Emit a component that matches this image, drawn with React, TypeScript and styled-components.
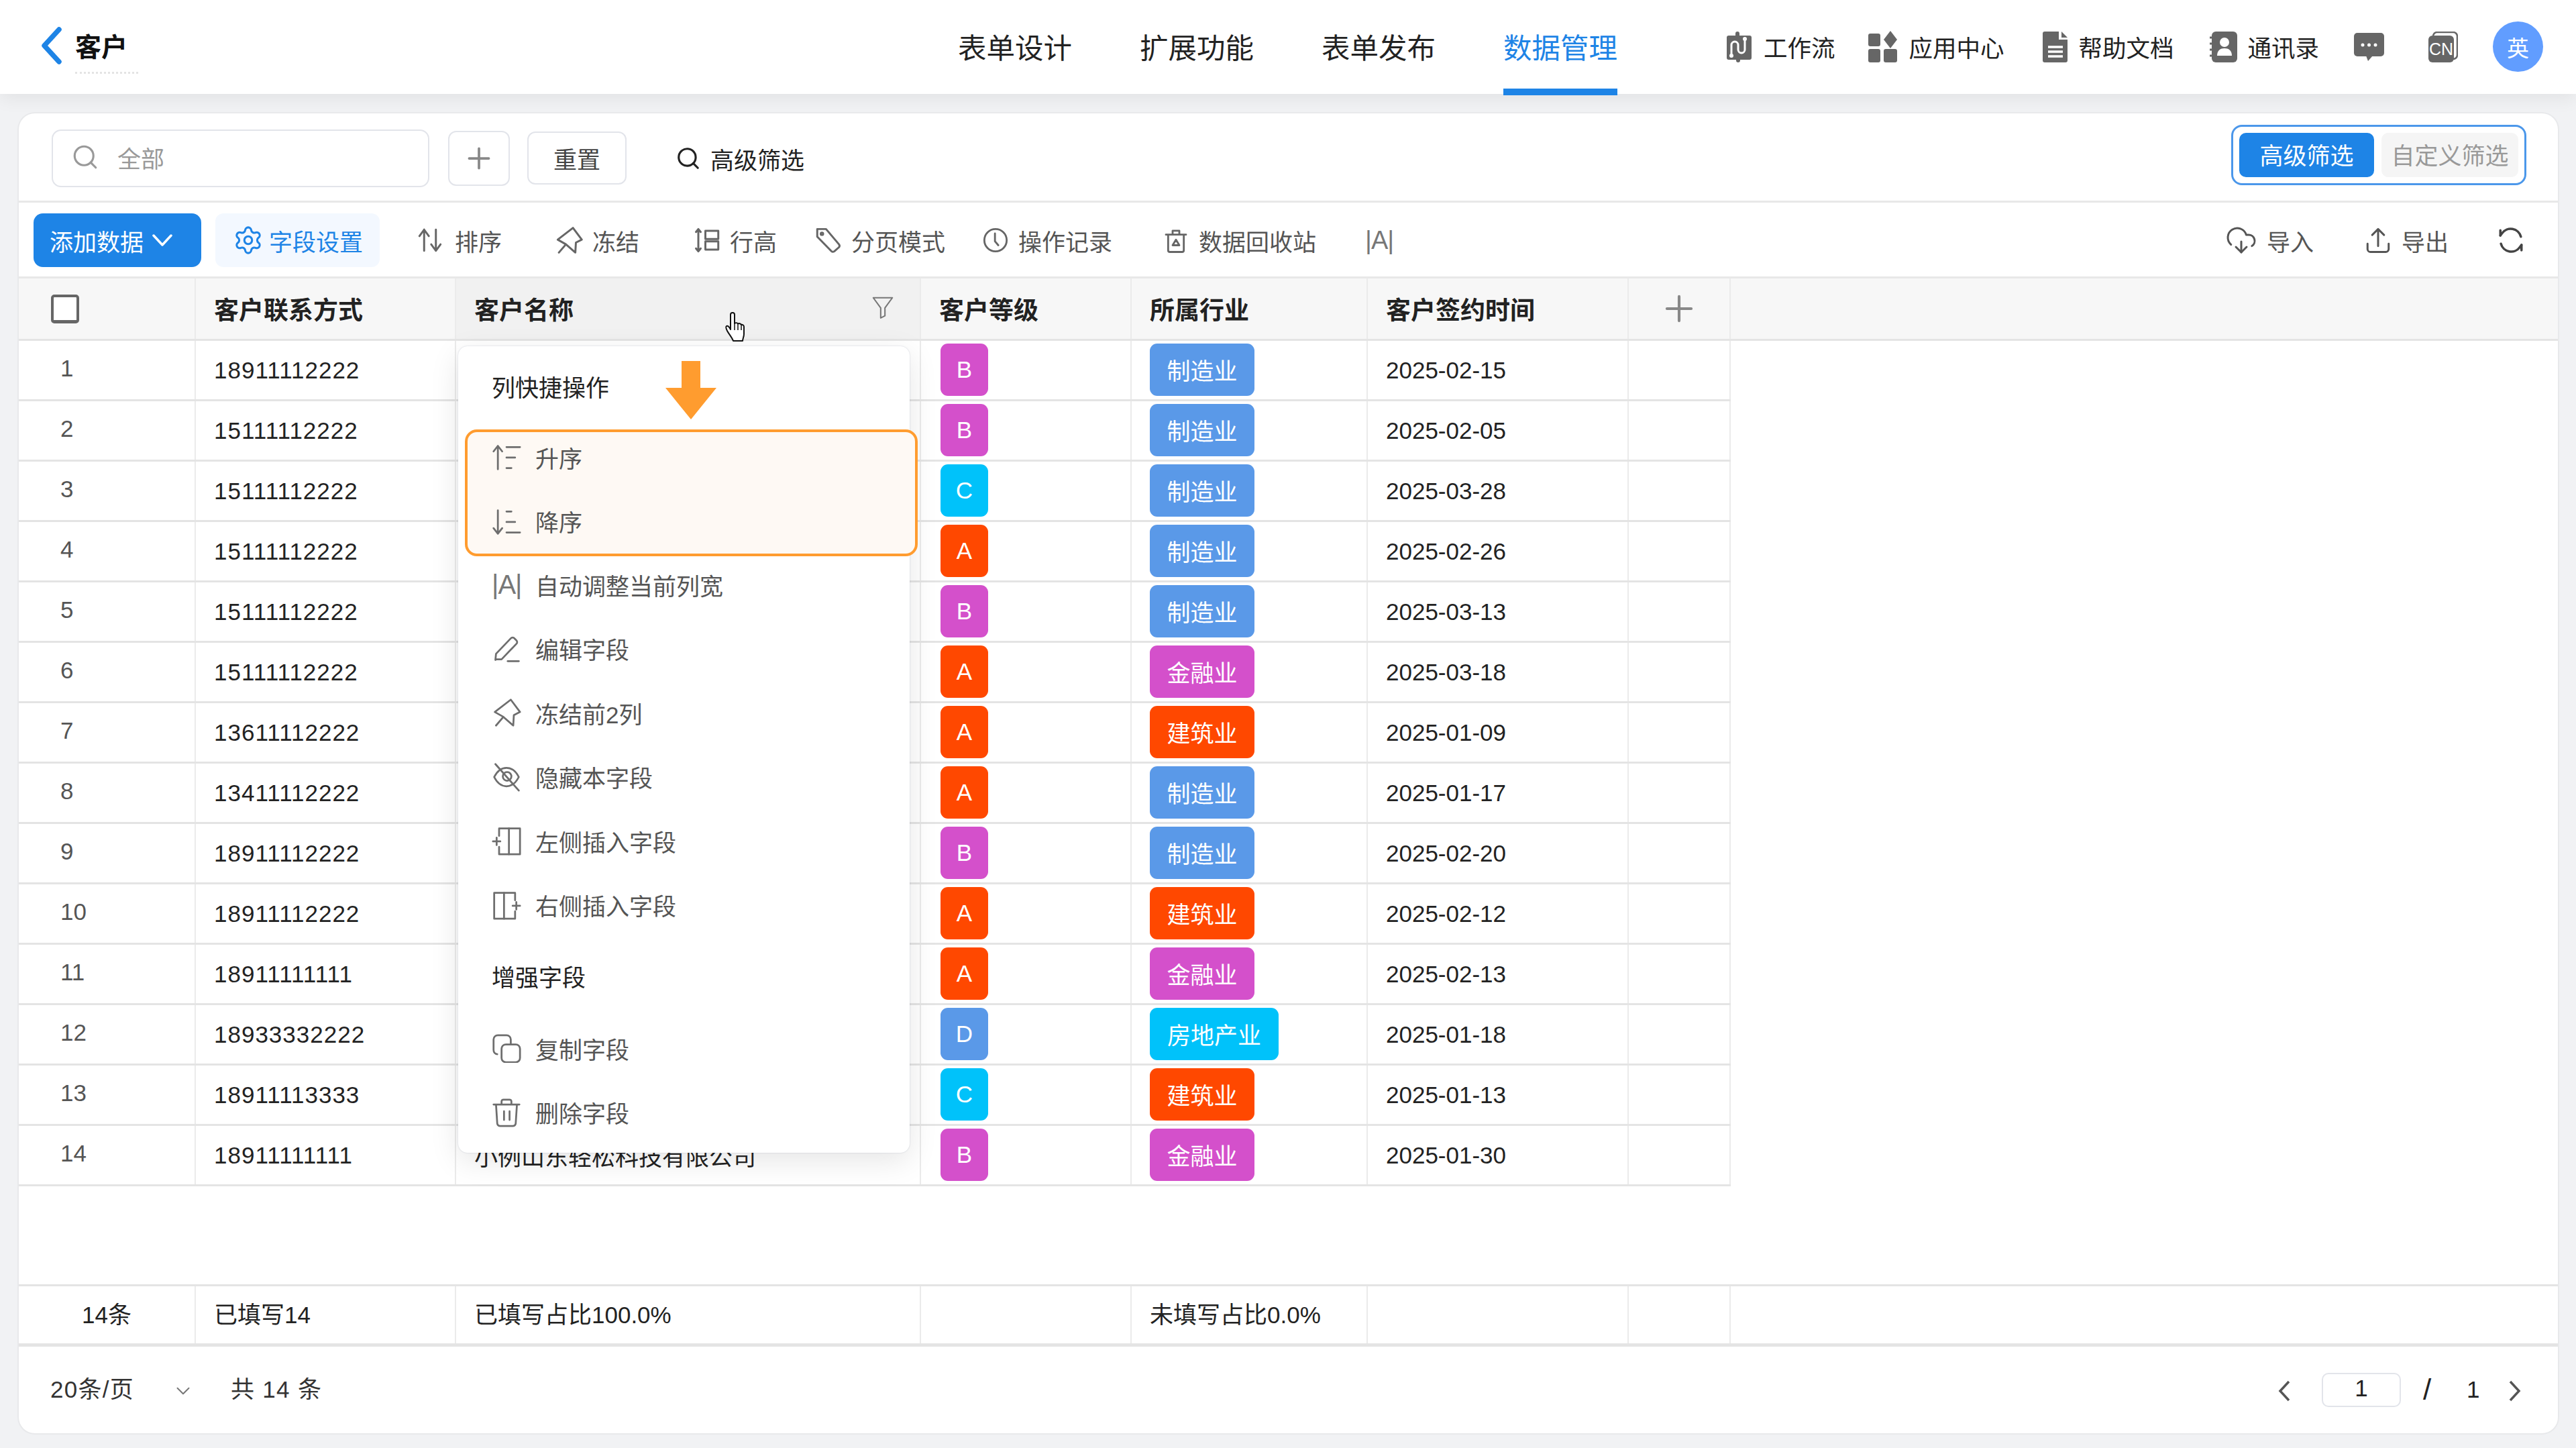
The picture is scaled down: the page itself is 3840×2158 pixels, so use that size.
import React from "react";
import styled, { createGlobalStyle } from "styled-components";
import { Search, Plus, Settings, ChevronDown, CloudDownload } from "lucide-react";

const FONT = `"Liberation Sans", "Noto Sans CJK SC", sans-serif`;
const COLUMNS = "264px 388px 693px 314px 352px 389px 152px";

const GlobalStyle = createGlobalStyle`
  html, body {
    margin: 0;
    padding: 0;
    background: #f1f2f4;
  }
  * {
    box-sizing: border-box;
  }
`;

const Page = styled.div`
  position: relative;
  width: 3840px;
  height: 2158px;
  overflow: hidden;
  background: #f1f2f4;
  font-family: ${FONT};
  font-size: 35px;
  color: #222;
`;

const TopBar = styled.div`
  position: absolute;
  left: 0;
  top: 0;
  width: 3840px;
  height: 140px;
  background: #fff;
  box-shadow: 0 6px 26px rgba(0, 0, 0, 0.07);
  z-index: 2;
`;

const BackLink = styled.div`
  position: absolute;
  left: 59px;
  top: 40px;
  display: flex;
  align-items: flex-start;
  gap: 19px;
`;

const PageTitle = styled.div`
  font-size: 39px;
  font-weight: 700;
  color: #111;
  line-height: 56px;
  border-bottom: 3px dotted #e4e4e4;
  padding-bottom: 8px;
  padding-right: 16px;
  margin-top: 3px;
`;

const Nav = styled.div`
  position: absolute;
  left: 1428px;
  top: 0;
  display: flex;
  gap: 101px;
`;

const NavItem = styled.div<{ $active?: boolean }>`
  height: 142px;
  padding-top: 44px;
  line-height: 58px;
  font-size: 42.5px;
  color: ${(p) => (p.$active ? "#1e84e6" : "#222")};
  border-bottom: 10px solid ${(p) => (p.$active ? "#1e84e6" : "transparent")};
`;

const TopActions = styled.div`
  position: absolute;
  left: 2572px;
  top: 32px;
  height: 75px;
  display: flex;
  align-items: center;
`;

const TopAction = styled.div<{ $gap?: number }>`
  display: flex;
  align-items: center;
  gap: 16px;
  margin-left: ${(p) => p.$gap ?? 0}px;
  color: #222;
  font-size: 35.5px;
`;

const Avatar = styled.div`
  width: 75px;
  height: 75px;
  border-radius: 50%;
  background: #619dff;
  color: #fff;
  font-size: 33px;
  display: flex;
  align-items: center;
  justify-content: center;
  margin-left: 52px;
`;

const Card = styled.div`
  position: absolute;
  left: 28px;
  top: 169px;
  width: 3785px;
  height: 1967px;
  background: #fff;
  border-radius: 24px;
  box-shadow: 0 0 0 2px #e8e9eb;
`;

const FilterRow = styled.div`
  position: relative;
  height: 133px;
  border-bottom: 3px solid #e8e8e8;
  display: flex;
  align-items: flex-start;
`;

const SearchBox = styled.div`
  margin: 24px 0 0 49px;
  width: 563px;
  height: 86px;
  border: 2px solid #e2e4ea;
  border-radius: 14px;
  display: flex;
  align-items: center;
  padding: 0 0 4px 27px;
  color: #999;
  gap: 27px;
`;

const SquareButton = styled.div`
  margin: 26px 0 0 28px;
  width: 92px;
  height: 82px;
  border: 2px solid #e2e4ea;
  border-radius: 12px;
  display: flex;
  align-items: center;
  justify-content: center;
  color: #888;
`;

const ResetButton = styled.div`
  margin: 27px 0 0 26px;
  width: 148px;
  height: 79px;
  border: 2px solid #e2e4ea;
  border-radius: 12px;
  display: flex;
  align-items: center;
  justify-content: center;
  color: #444;
`;

const AdvancedLink = styled.div`
  margin: 36px 0 0 73px;
  height: 62px;
  display: flex;
  align-items: center;
  gap: 14px;
  color: #222;
`;

const ModeSwitch = styled.div`
  margin: 17px 47px 0 auto;
  width: 440px;
  height: 90px;
  border: 3px solid #4b97ea;
  border-radius: 16px;
  display: flex;
  align-items: center;
  padding-left: 9px;
  gap: 11px;
`;

const ModeTab = styled.div<{ $active?: boolean }>`
  width: ${(p) => (p.$active ? 201 : 204)}px;
  height: 66px;
  border-radius: 10px;
  padding-bottom: 4px;
  background: ${(p) => (p.$active ? "#1e84e6" : "#f5f5f5")};
  color: ${(p) => (p.$active ? "#fff" : "#999")};
  display: flex;
  align-items: center;
  justify-content: center;
`;

const Toolbar = styled.div`
  height: 113px;
  border-bottom: 3px solid #e8e8e8;
  display: flex;
  align-items: center;
  padding-left: 22px;
  padding-top: 2px;
`;

const AddButton = styled.div`
  width: 250px;
  height: 80px;
  border-radius: 14px;
  background: #1e84e6;
  color: #fff;
  display: flex;
  align-items: center;
  padding-left: 24px;
  gap: 12px;
`;

const FieldButton = styled.div`
  width: 245px;
  height: 80px;
  margin-left: 21px;
  border-radius: 12px;
  background: #f3f8ff;
  color: #1e84e6;
  display: flex;
  align-items: center;
  padding-left: 26px;
  gap: 8px;
`;

const ToolItem = styled.div<{ $gap: number; $end?: number }>`
  display: flex;
  align-items: center;
  gap: 14px;
  margin-left: ${(p) => p.$gap}px;
  margin-right: ${(p) => p.$end ?? 0}px;
  color: #555;
`;

const ToolSpacer = styled.div`
  margin-left: auto;
`;

const WidthGlyph = styled.span<{ $size: number }>`
  font-size: ${(p) => p.$size}px;
  width: 44px;
  text-align: center;
  color: #777;
  letter-spacing: -1px;
`;

const HeaderRow = styled.div`
  height: 93px;
  display: grid;
  grid-template-columns: ${COLUMNS};
  background: #f7f7f7;
  border-bottom: 3px solid #e4e4e4;
`;

const HeaderCell = styled.div<{ $hover?: boolean; $center?: boolean }>`
  position: relative;
  display: flex;
  align-items: center;
  justify-content: ${(p) => (p.$center ? "center" : "flex-start")};
  padding-left: ${(p) => (p.$center ? 0 : 27)}px;
  font-size: 37px;
  font-weight: 700;
  color: #222;
  border-right: 2px solid #ebebeb;
  background: ${(p) => (p.$hover ? "#f1f1f1" : "transparent")};
`;

const CheckBox = styled.div`
  width: 42px;
  height: 43px;
  margin-left: 21px;
  border: 4px solid #666;
  border-bottom-width: 5px;
  border-radius: 5px;
  background: #fff;
`;

const FilterGlyph = styled.div`
  position: absolute;
  right: 36px;
  top: 24px;
  line-height: 0;
`;

const BodyRow = styled.div`
  width: 2552px;
  height: 90px;
  display: grid;
  grid-template-columns: ${COLUMNS};
  border-bottom: 3px solid #e4e4e4;
`;

const Cell = styled.div`
  display: flex;
  align-items: center;
  padding-left: 27px;
  border-right: 2px solid #ebebeb;
  color: #222;
  white-space: nowrap;
`;

const NumberCell = styled(Cell)`
  padding: 0 0 5px 62px;
  color: #555;
`;

const PhoneCell = styled(Cell)`
  letter-spacing: 1px;
`;

const LevelCell = styled(Cell)`
  padding-left: 29px;
`;

const Badge = styled.div<{ $color: string; $width: number }>`
  width: ${(p) => p.$width}px;
  height: 78px;
  margin-top: -2px;
  border-radius: 11px;
  background: ${(p) => p.$color};
  color: #fff;
  display: flex;
  align-items: center;
  justify-content: center;
`;

const EmptyGap = styled.div`
  height: 149px;
  border-bottom: 3px solid #e4e4e4;
`;

const SummaryRow = styled(BodyRow)`
  width: 100%;
  border-bottom: 5px solid #e4e4e4;
  grid-template-columns: ${COLUMNS} 1fr;
`;

const SummaryCell = styled(Cell)`
  padding-bottom: 6px;
`;

const SummaryCount = styled(Cell)`
  padding: 0 0 6px 94px;
`;

const SummaryLast = styled.div``;

const Footer = styled.div`
  position: relative;
  height: 129px;
`;

const FooterText = styled.div<{ $x: number; $color?: string; $size?: number }>`
  position: absolute;
  left: ${(p) => p.$x}px;
  top: 42px;
  line-height: 44px;
  letter-spacing: 1.3px;
  font-size: ${(p) => p.$size ?? 35}px;
  color: ${(p) => p.$color ?? "#333"};
`;

const FooterIcon = styled.div<{ $x: number }>`
  position: absolute;
  left: ${(p) => p.$x}px;
  top: 49px;
  line-height: 0;
`;

const PageInput = styled.div`
  position: absolute;
  left: 3433px;
  top: 39px;
  width: 118px;
  height: 51px;
  border: 2px solid #e2e4ea;
  border-radius: 10px;
  display: flex;
  align-items: center;
  justify-content: center;
  padding-bottom: 6px;
  color: #222;
`;

const Menu = styled.div`
  position: absolute;
  left: 655px;
  top: 347px;
  width: 673px;
  height: 1202px;
  padding-top: 14px;
  background: #fff;
  border-radius: 14px;
  box-shadow: 0 0 2px rgba(60, 70, 110, 0.25), 0 12px 44px rgba(0, 0, 0, 0.1);
  z-index: 3;
`;

const MenuTitle = styled.div<{ $top?: number }>`
  height: 96px;
  margin-top: ${(p) => p.$top ?? 0}px;
  padding: 0 0 5px 50px;
  display: flex;
  align-items: center;
  color: #222;
`;

const MenuItem = styled.div<{ $inset?: number; $top?: number }>`
  height: 95.5px;
  margin-top: ${(p) => p.$top ?? 0}px;
  padding: 0 0 5px ${(p) => p.$inset ?? 50}px;
  display: flex;
  align-items: center;
  gap: 21px;
  color: #555;
`;

const SortGroup = styled.div`
  width: 675px;
  height: 189px;
  margin: 14px 0 -3px 10px;
  border: 4px solid #ff9c2f;
  border-radius: 18px;
  background: #fef9f4;
  & > div:first-child {
    margin-top: -8px;
  }
`;

const OrangeArrow = styled.svg`
  position: absolute;
  left: 309px;
  top: 22px;
`;

const HandCursor = styled.svg`
  position: absolute;
  left: 1052px;
  top: 295px;
  z-index: 4;
`;

type IconProps = { size?: number; stroke?: string; weight?: number; children: React.ReactNode };

const Line = ({ size = 42, stroke = "#666", weight = 1.7, children }: IconProps) => (
  <svg width={size} height={size} viewBox="0 0 24 24" fill="none" stroke={stroke} strokeWidth={weight} strokeLinecap="round" strokeLinejoin="round">
    {children}
  </svg>
);

const Solid = ({ width, height, children }: { width: number; height: number; children: React.ReactNode }) => (
  <svg width={width} height={height} viewBox={`0 0 ${width} ${height}`}>
    {children}
  </svg>
);

const PIN = "M15.500 1.500L23 11.500 18 14l-.5 8.500-8-7-7-4zM9.500 15.500l-6 7";

const menuGroups = [
  { text: "自动调整当前列宽", glyph: true },
  { text: "编辑字段", icon: <><path d="M3 21l.5-5L15.500 3.500a2 2 0 0 1 3 0l1.500 1.500a2 2 0 0 1 0 3L8 20.500H3" /><path d="M13 22h9" /></> },
  { text: "冻结前2列", icon: <path d={PIN} /> },
  { text: "隐藏本字段", icon: <><path d="M2 12c2.500-5 6-7.500 10-7.500s7.500 2.500 10 7.500c-2.500 5-6 7.500-10 7.500s-7.500-2.500-10-7.500z" /><circle cx="12.500" cy="11.500" r="3.500" /><path d="M3 1.500l19 21.500" /></> },
  { text: "左侧插入字段", icon: <><path d="M6 8V2h17v21H6v-6" /><path d="M14 2v21" /><path d="M1 12.500h6M4 9.500v6" /></> },
  { text: "右侧插入字段", icon: <><path d="M19 8V2H2v21h17v-6" /><path d="M10 2v21" /><path d="M17 12.500h6M20 9.500v6" /></> },
];

const rows: [string, string, string, string][] = [
  ["18911112222", "B", "制造业", "2025-02-15"],
  ["15111112222", "B", "制造业", "2025-02-05"],
  ["15111112222", "C", "制造业", "2025-03-28"],
  ["15111112222", "A", "制造业", "2025-02-26"],
  ["15111112222", "B", "制造业", "2025-03-13"],
  ["15111112222", "A", "金融业", "2025-03-18"],
  ["13611112222", "A", "建筑业", "2025-01-09"],
  ["13411112222", "A", "制造业", "2025-01-17"],
  ["18911112222", "B", "制造业", "2025-02-20"],
  ["18911112222", "A", "建筑业", "2025-02-12"],
  ["18911111111", "A", "金融业", "2025-02-13"],
  ["18933332222", "D", "房地产业", "2025-01-18"],
  ["18911113333", "C", "建筑业", "2025-01-13"],
  ["18911111111", "B", "金融业", "2025-01-30"],
];

const levelColor: Record<string, string> = {
  A: "#ff4800",
  B: "#d450cb",
  C: "#00c2fa",
  D: "#5a99e8",
};

const industryColor: Record<string, string> = {
  制造业: "#5a99e8",
  金融业: "#d450cb",
  建筑业: "#ff4800",
  房地产业: "#00c2fa",
};

export default function App() {
  return (
    <Page>
      <GlobalStyle />
      <TopBar>
        <BackLink>
          <svg width="34" height="56" viewBox="0 0 34 56" fill="none" stroke="#1e84e6" strokeWidth="7.500" strokeLinecap="round" strokeLinejoin="round">
            <path d="M29 4L7 28l22 24" />
          </svg>
          <PageTitle>客户</PageTitle>
        </BackLink>
        <Nav>
          <NavItem>表单设计</NavItem>
          <NavItem>扩展功能</NavItem>
          <NavItem>表单发布</NavItem>
          <NavItem $active>数据管理</NavItem>
        </Nav>
        <TopActions>
          <TopAction>
            <Solid width={41} height={46}>
              <path d="M5 6h10V3a3 3 0 0 1 6 0v3h15a3 3 0 0 1 3 3v30a3 3 0 0 1-3 3H22v1a3 3 0 0 1-6 0v-1H5a3 3 0 0 1-3-3V9a3 3 0 0 1 3-3z" fill="#666" />
              <path d="M9 36V20a5 5 0 0 1 10 0v7a5 5 0 0 0 10 0V11" stroke="#fff" strokeWidth="3" fill="none" />
              <circle cx="9" cy="36" r="3" fill="#fff" />
              <circle cx="29" cy="11" r="3" fill="#fff" />
            </Solid>
            工作流
          </TopAction>
          <TopAction $gap={48}>
            <Solid width={46} height={47}>
              <rect x="1" y="4" width="18" height="19" rx="3" fill="#666" />
              <path d="M34 0l10 13-10 13-10-13z" fill="#666" />
              <rect x="1" y="27" width="18" height="20" rx="3" fill="#666" />
              <rect x="24" y="27" width="20" height="20" rx="3" fill="#666" />
            </Solid>
            应用中心
          </TopAction>
          <TopAction $gap={56}>
            <Solid width={39} height={47}>
              <path d="M4 1h21v12h13v31a3 3 0 0 1-3 3H4a3 3 0 0 1-3-3V4a3 3 0 0 1 3-3z" fill="#666" />
              <path d="M29 1l9 9h-9z" fill="#666" />
              <path d="M9 24h22M9 31h22M9 38h22" stroke="#fff" strokeWidth="3.500" />
            </Solid>
            帮助文档
          </TopAction>
          <TopAction $gap={53}>
            <Solid width={41} height={46}>
              <rect x="3" y="0" width="38" height="46" rx="6" fill="#666" />
              <path d="M0 9h6M0 18h6M0 27h6M0 36h6" stroke="#666" strokeWidth="3" />
              <circle cx="22" cy="16" r="7" fill="#fff" />
              <path d="M11 36c0-8 5-11 11-11s11 3 11 11z" fill="#fff" />
            </Solid>
            通讯录
          </TopAction>
          <TopAction $gap={52}>
            <Solid width={45} height={42}>
              <rect x="0" y="0" width="45" height="35" rx="5" fill="#666" />
              <path d="M18 34h10l-7 8z" fill="#666" />
              <circle cx="13" cy="18" r="2.500" fill="#fff" />
              <circle cx="22.500" cy="18" r="2.500" fill="#fff" />
              <circle cx="32" cy="18" r="2.500" fill="#fff" />
            </Solid>
          </TopAction>
          <TopAction $gap={66}>
            <Solid width={44} height={46}>
              <rect x="7" y="1" width="36" height="40" rx="6" fill="none" stroke="#666" strokeWidth="2.500" />
              <rect x="0" y="6" width="38" height="40" rx="6" fill="#666" />
              <text x="19" y="35" textAnchor="middle" fontSize="25" fill="#fff" fontFamily="Liberation Sans">CN</text>
            </Solid>
          </TopAction>
          <Avatar>英</Avatar>
        </TopActions>
      </TopBar>

      <Card>
        <FilterRow>
          <SearchBox>
            <Search size={42} color="#999" strokeWidth={1.8} />
            全部
          </SearchBox>
          <SquareButton>
            <Plus size={50} strokeWidth={1.8} />
          </SquareButton>
          <ResetButton>重置</ResetButton>
          <AdvancedLink>
            <Search size={38} color="#222" strokeWidth={2} />
            高级筛选
          </AdvancedLink>
          <ModeSwitch>
            <ModeTab $active>高级筛选</ModeTab>
            <ModeTab>自定义筛选</ModeTab>
          </ModeSwitch>
        </FilterRow>

        <Toolbar>
          <AddButton>
            添加数据
            <svg width="32" height="20" viewBox="0 0 32 20" fill="none" stroke="#fff" strokeWidth="3.500" strokeLinecap="round" strokeLinejoin="round">
              <path d="M3 3l13 14L29 3" />
            </svg>
          </AddButton>
          <FieldButton>
            <Settings size={46} color="#1e84e6" strokeWidth={1.6} />
            字段设置
          </FieldButton>
          <ToolItem $gap={54}>
            <Line>
              <path d="M7 21V3M7 3L3 8.500M7 3l4 5.500M17 3v18M17 21l-4-5.500M17 21l4-5.500" />
            </Line>
            <span style={{ marginLeft: 2 }}>排序</span>
          </ToolItem>
          <ToolItem $gap={79}>
            <Line><path d={PIN} /></Line>
            冻结
          </ToolItem>
          <ToolItem $gap={81}>
            <Line>
              <path d="M4 3v18M2 5l2-2.500L6 5M2 19l2 2.500L6 19" />
              <rect x="10" y="4" width="11" height="7" />
              <rect x="10" y="13" width="11" height="7" />
            </Line>
            <span style={{ marginLeft: -2 }}>行高</span>
          </ToolItem>
          <ToolItem $gap={55}>
            <Line>
              <path d="M3 2.500h7.500L21.500 15.500a2 2 0 0 1 0 2.500l-4 3.500a2 2 0 0 1-2.500-.2L3 9z" />
              <circle cx="7" cy="6.500" r="1" />
            </Line>
            分页模式
          </ToolItem>
          <ToolItem $gap={55}>
            <Line size={40}>
              <circle cx="12" cy="12" r="10" />
              <path d="M11.500 6v7l3 3.500" />
            </Line>
            操作记录
          </ToolItem>
          <ToolItem $gap={75}>
            <Line size={40}>
              <path d="M3 7h18M9 7V3.500h6V7M5 7v14a1.500 1.500 0 0 0 1.500 1.500h11A1.500 1.500 0 0 0 19 21V7M12 11.500l3 5H9z" />
            </Line>
            数据回收站
          </ToolItem>
          <ToolItem $gap={72}>
            <WidthGlyph $size={38}>|A|</WidthGlyph>
          </ToolItem>
          <ToolSpacer />
          <ToolItem $gap={0}>
            <CloudDownload size={48} color="#555" strokeWidth={1.5} />
            导入
          </ToolItem>
          <ToolItem $gap={75}>
            <Line size={42} stroke="#555">
              <path d="M12 2.500V17M7 7.500l5-5 5 5M3 15v4.500A2.500 2.500 0 0 0 5.500 22h13a2.500 2.500 0 0 0 2.500-2.500V15" />
            </Line>
            导出
          </ToolItem>
          <ToolItem $gap={72} $end={49}>
            <Line size={42} stroke="#444" weight={2}>
              <path d="M20.500 9a9 9 0 0 0-16-3L3 8M3.500 15a9 9 0 0 0 16 3L21 16" />
              <path d="M3 3.500V8M21 20.500V16" />
            </Line>
          </ToolItem>
        </Toolbar>

        <HeaderRow>
          <HeaderCell>
            <CheckBox />
          </HeaderCell>
          <HeaderCell>客户联系方式</HeaderCell>
          <HeaderCell $hover>
            客户名称
            <FilterGlyph>
              <Line size={38} stroke="#777" weight={1.3}>
                <path d="M3 3h18l-7 9.500V20l-4 2v-9.500z" />
              </Line>
            </FilterGlyph>
          </HeaderCell>
          <HeaderCell>客户等级</HeaderCell>
          <HeaderCell>所属行业</HeaderCell>
          <HeaderCell>客户签约时间</HeaderCell>
          <HeaderCell $center>
            <Plus size={62} color="#888" strokeWidth={1.6} />
          </HeaderCell>
        </HeaderRow>

        {rows.map(([phone, level, industry, date], i) => (
          <BodyRow key={i}>
            <NumberCell>{i + 1}</NumberCell>
            <PhoneCell>{phone}</PhoneCell>
            <Cell>{i === 13 ? "小例山东轻松科技有限公司" : ""}</Cell>
            <LevelCell>
              <Badge $color={levelColor[level]} $width={71}>{level}</Badge>
            </LevelCell>
            <Cell>
              <Badge $color={industryColor[industry]} $width={industry.length === 4 ? 192 : 156}>{industry}</Badge>
            </Cell>
            <Cell>{date}</Cell>
            <Cell />
          </BodyRow>
        ))}

        <EmptyGap />
        <SummaryRow>
          <SummaryCount>14条</SummaryCount>
          <SummaryCell>已填写14</SummaryCell>
          <SummaryCell>已填写占比100.0%</SummaryCell>
          <SummaryCell />
          <SummaryCell>未填写占比0.0%</SummaryCell>
          <SummaryCell />
          <SummaryCell />
          <SummaryLast />
        </SummaryRow>

        <Footer>
          <FooterText $x={47}>20条/页</FooterText>
          <FooterIcon $x={228}>
            <ChevronDown size={34} color="#777" strokeWidth={1.4} />
          </FooterIcon>
          <FooterText $x={316}>共 14 条</FooterText>
          <FooterIcon $x={3365}>
            <svg width="24" height="34" viewBox="0 0 24 34" fill="none" stroke="#555" strokeWidth="3.500">
              <path d="M19 3L6 17l13 14" />
            </svg>
          </FooterIcon>
          <PageInput>1</PageInput>
          <FooterText $x={3584} $color="#222" $size={44}>/</FooterText>
          <FooterText $x={3649} $color="#222">1</FooterText>
          <FooterIcon $x={3709}>
            <svg width="24" height="34" viewBox="0 0 24 34" fill="none" stroke="#555" strokeWidth="3.500">
              <path d="M5 3l13 14L5 31" />
            </svg>
          </FooterIcon>
        </Footer>

        <Menu>
          <OrangeArrow width="76" height="87" viewBox="0 0 76 87">
            <path d="M24 0h28v40h24L38 87 0 40h24z" fill="#ff9c2f" />
          </OrangeArrow>
          <MenuTitle>列快捷操作</MenuTitle>
          <SortGroup>
            <MenuItem $inset={36}>
              <Line size={44} stroke="#6e6e6e" weight={1.5}>
                <path d="M5 22V3M1.500 7.500L5 3l3.500 4.500M12 4h11M12 12.500h7M12 21h4" />
              </Line>
              升序
            </MenuItem>
            <MenuItem $inset={36}>
              <Line size={44} stroke="#6e6e6e" weight={1.5}>
                <path d="M5 3v19M1.500 17.500L5 22l3.500-4.500M12 4h4M12 12.500h7M12 21h11" />
              </Line>
              降序
            </MenuItem>
          </SortGroup>
          {menuGroups.map((m) => (
            <MenuItem key={m.text}>
              {m.glyph ? (
                <WidthGlyph $size={40}>|A|</WidthGlyph>
              ) : (
                <Line size={44} stroke="#6e6e6e" weight={1.5}>{m.icon}</Line>
              )}
              {m.text}
            </MenuItem>
          ))}
          <MenuTitle $top={10}>增强字段</MenuTitle>
          <MenuItem $top={12}>
            <Line size={44} stroke="#6e6e6e" weight={1.5}>
              <rect x="8" y="9" width="15" height="14.500" rx="3.500" />
              <path d="M4.500 17A3.500 3.500 0 0 1 1.500 13.500V5A3.500 3.500 0 0 1 5 1.500h7A3.500 3.500 0 0 1 15.500 5v4" />
            </Line>
            复制字段
          </MenuItem>
          <MenuItem>
            <Line size={44} stroke="#6e6e6e" weight={1.5}>
              <path d="M1.500 5.500h21M8 5.500V3a1.500 1.500 0 0 1 1.500-1.500h5A1.500 1.500 0 0 1 16 3v2.500M3.500 5.500L4.500 21a2.500 2.500 0 0 0 2.500 2h10a2.500 2.500 0 0 0 2.500-2l1-15.500M10 11v7M14.500 11v7" />
            </Line>
            删除字段
          </MenuItem>
        </Menu>

        <HandCursor width="36" height="46" viewBox="0 0 36 46">
          <path d="M12 2c2 0 3 1.500 3 3v13c1.500-1 4-1 5 .5 1.500-.8 4-.5 5 1.500 1.500-.5 4 .5 4 3V34c0 4-2 7-2 10H13c-1-4-7-11-9-15-1.500-3-2.500-6-1-7 2-1 4 1 6 5V5c0-2 1.500-3 3-3z" fill="#fff" stroke="#111" strokeWidth="2" strokeLinejoin="round" />
          <path d="M15 18v10M20 18.500V28M25 20v8" stroke="#111" strokeWidth="1.500" fill="none" />
        </HandCursor>
      </Card>
    </Page>
  );
}
